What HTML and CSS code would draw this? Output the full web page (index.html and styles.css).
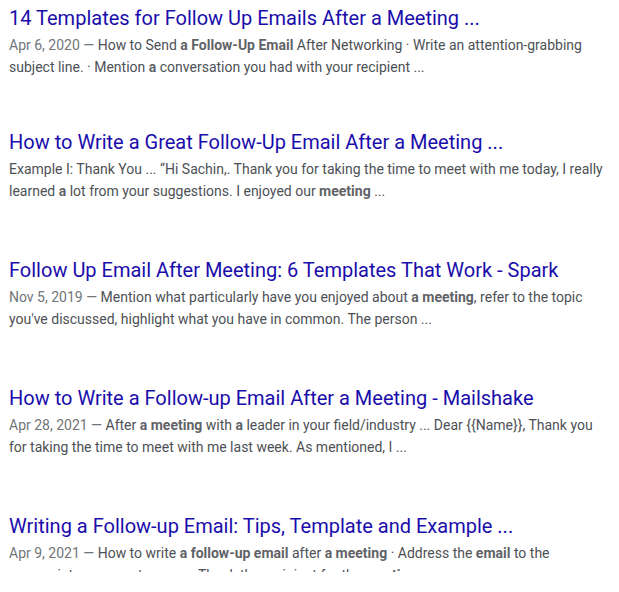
FILE: index.html
```html
<!DOCTYPE html>
<html lang="en">
<head>
    <meta charset="UTF-8">
    <meta name="viewport" content="width=device-width, initial-scale=1.0">
    <title>Search results</title>
    <link rel="stylesheet" href="styles.css">
</head>
<body>
    <div class="results">
        <div class="result first">
            <h3 class="title">14 Templates for Follow Up Emails After a Meeting ...</h3>
            <div class="snippet"><span class="date">Apr 6, 2020 — </span>How to Send <b>a Follow-Up Email</b> After Networking · Write an attention-grabbing subject line. · Mention <b>a</b> conversation you had with your recipient ...</div>
        </div>

        <div class="result">
            <h3 class="title">How to Write a Great Follow-Up Email After a Meeting ...</h3>
            <div class="snippet">Example I: Thank You ... “Hi Sachin,. Thank you for taking the time to meet with me today, I really learned <b>a</b> lot from your suggestions. I enjoyed our <b>meeting</b> ...</div>
        </div>

        <div class="result">
            <h3 class="title">Follow Up Email After Meeting: 6 Templates That Work - Spark</h3>
            <div class="snippet"><span class="date">Nov 5, 2019 — </span>Mention what particularly have you enjoyed about <b>a meeting</b>, refer to the topic you've discussed, highlight what you have in common. The person ...</div>
        </div>

        <div class="result">
            <h3 class="title">How to Write a Follow-up Email After a Meeting - Mailshake</h3>
            <div class="snippet"><span class="date">Apr 28, 2021 — </span>After <b>a meeting</b> with <b>a</b> leader in your field/industry ... Dear {{Name}}, Thank you for taking the time to meet with me last week. As mentioned, I ...</div>
        </div>

        <div class="result">
            <h3 class="title">Writing a Follow-up Email: Tips, Template and Example ...</h3>
            <div class="snippet"><span class="date">Apr 9, 2021 — </span>How to write <b>a follow-up email</b> after <b>a meeting</b> · Address the <b>email</b> to the appropriate person at your ... · Thank the recipient for the <b>meeting</b> ...</div>
        </div>
    </div>
</body>
</html>
```

FILE: styles.css
```css
body {
    margin: 0;
    background: #fff;
    font-family: Roboto, "Liberation Sans", Arial, sans-serif;
}
.results {
    height: 572px;
    overflow: hidden;
    padding-left: 9px;
}
.result {
    max-width: 600px;
    margin-bottom: 50px;
}
.result.first {
    margin-bottom: 46px;
}
.title {
    margin: 0;
    padding-top: 5px;
    font-size: 20px;
    font-weight: normal;
    line-height: 26px;
    color: #1a0dab;
}
.snippet {
    margin-top: 3px;
    font-size: 14px;
    line-height: 22px;
    color: #4d5156;
}
.snippet b {
    color: #5f6368;
}
.date {
    color: #70757a;
}
```
